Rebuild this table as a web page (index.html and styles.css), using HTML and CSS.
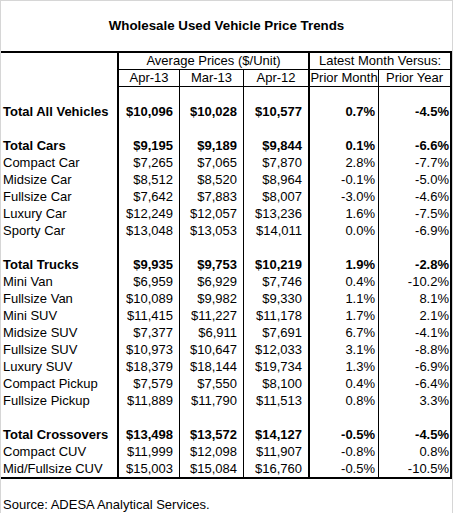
FILE: index.html
```html
<!DOCTYPE html>
<html lang="en">
<head>
    <meta charset="UTF-8">
    <meta name="viewport" content="width=device-width, initial-scale=1.0">
    <title>Wholesale Used Vehicle Price Trends</title>
    <link rel="stylesheet" href="styles.css">
</head>
<body>
    <div class="sheet">
        <h1 class="title">Wholesale Used Vehicle Price Trends</h1>

        <table class="trends">
            <colgroup>
                <col class="c-label">
                <col class="c-apr13">
                <col class="c-mar13">
                <col class="c-apr12">
                <col class="c-month">
                <col class="c-year">
            </colgroup>
            <thead>
                <tr class="head-top">
                    <th class="corner" rowspan="2"></th>
                    <th class="group" colspan="3">Average Prices ($/Unit)</th>
                    <th class="group" colspan="2">Latest Month Versus:</th>
                </tr>
                <tr class="head-sub">
                    <th>Apr-13</th>
                    <th>Mar-13</th>
                    <th>Apr-12</th>
                    <th>Prior Month</th>
                    <th>Prior Year</th>
                </tr>
            </thead>
            <tbody>
                <tr class="gap first"><td></td><td></td><td></td><td></td><td></td><td></td></tr>
                <tr class="total"><td>Total All Vehicles</td><td>$10,096</td><td>$10,028</td><td>$10,577</td><td>0.7%</td><td>-4.5%</td></tr>

                <tr class="gap"><td></td><td></td><td></td><td></td><td></td><td></td></tr>
                <tr class="total"><td>Total Cars</td><td>$9,195</td><td>$9,189</td><td>$9,844</td><td>0.1%</td><td>-6.6%</td></tr>
                <tr><td>Compact Car</td><td>$7,265</td><td>$7,065</td><td>$7,870</td><td>2.8%</td><td>-7.7%</td></tr>
                <tr><td>Midsize Car</td><td>$8,512</td><td>$8,520</td><td>$8,964</td><td>-0.1%</td><td>-5.0%</td></tr>
                <tr><td>Fullsize Car</td><td>$7,642</td><td>$7,883</td><td>$8,007</td><td>-3.0%</td><td>-4.6%</td></tr>
                <tr><td>Luxury Car</td><td>$12,249</td><td>$12,057</td><td>$13,236</td><td>1.6%</td><td>-7.5%</td></tr>
                <tr><td>Sporty Car</td><td>$13,048</td><td>$13,053</td><td>$14,011</td><td>0.0%</td><td>-6.9%</td></tr>

                <tr class="gap"><td></td><td></td><td></td><td></td><td></td><td></td></tr>
                <tr class="total"><td>Total Trucks</td><td>$9,935</td><td>$9,753</td><td>$10,219</td><td>1.9%</td><td>-2.8%</td></tr>
                <tr><td>Mini Van</td><td>$6,959</td><td>$6,929</td><td>$7,746</td><td>0.4%</td><td>-10.2%</td></tr>
                <tr><td>Fullsize Van</td><td>$10,089</td><td>$9,982</td><td>$9,330</td><td>1.1%</td><td>8.1%</td></tr>
                <tr><td>Mini SUV</td><td>$11,415</td><td>$11,227</td><td>$11,178</td><td>1.7%</td><td>2.1%</td></tr>
                <tr><td>Midsize SUV</td><td>$7,377</td><td>$6,911</td><td>$7,691</td><td>6.7%</td><td>-4.1%</td></tr>
                <tr><td>Fullsize SUV</td><td>$10,973</td><td>$10,647</td><td>$12,033</td><td>3.1%</td><td>-8.8%</td></tr>
                <tr><td>Luxury SUV</td><td>$18,379</td><td>$18,144</td><td>$19,734</td><td>1.3%</td><td>-6.9%</td></tr>
                <tr><td>Compact Pickup</td><td>$7,579</td><td>$7,550</td><td>$8,100</td><td>0.4%</td><td>-6.4%</td></tr>
                <tr><td>Fullsize Pickup</td><td>$11,889</td><td>$11,790</td><td>$11,513</td><td>0.8%</td><td>3.3%</td></tr>

                <tr class="gap"><td></td><td></td><td></td><td></td><td></td><td></td></tr>
                <tr class="total"><td>Total Crossovers</td><td>$13,498</td><td>$13,572</td><td>$14,127</td><td>-0.5%</td><td>-4.5%</td></tr>
                <tr><td>Compact CUV</td><td>$11,999</td><td>$12,098</td><td>$11,907</td><td>-0.8%</td><td>0.8%</td></tr>
                <tr><td>Mid/Fullsize CUV</td><td>$15,003</td><td>$15,084</td><td>$16,760</td><td>-0.5%</td><td>-10.5%</td></tr>
            </tbody>
        </table>

        <p class="source">Source: ADESA Analytical Services.</p>
    </div>
</body>
</html>
```

FILE: styles.css
```css
* {
    margin: 0;
    padding: 0;
    box-sizing: border-box;
}

body {
    background: #ffffff;
    font-family: 'Liberation Sans', Arial, sans-serif;
    font-size: 13px;
    color: #000000;
}

.sheet {
    width: 453px;
    height: 513px;
    border-top: 1px solid #d6d6d6;
    border-left: 1px solid #d6d6d6;
    border-right: 1px solid #d6d6d6;
    overflow: hidden;
}

.title {
    font-size: 13.33px;
    font-weight: bold;
    line-height: 17px;
    text-align: center;
    padding: 16px 0 17px;
}

/* table grid */
.trends {
    width: 451px;
    table-layout: fixed;
    border-collapse: separate;
    border-spacing: 0;
    border-top: 2px solid #000;
    border-bottom: 2px solid #000;
}

.c-label { width: 118px; }
.c-apr13 { width: 61px; }
.c-mar13 { width: 64px; }
.c-apr12 { width: 66px; }
.c-month { width: 69px; }
.c-year  { width: 73px; }

.trends th,
.trends td {
    height: 17px;
    line-height: 16px;
    white-space: nowrap;
    overflow: hidden;
}

.trends th {
    font-weight: normal;
    text-align: center;
    border-right: 1px solid #000;
}

.trends th.corner,
.trends th.group {
    border-right: 2px solid #000;
}

.trends th.group {
    border-bottom: 1px solid #000;
}

.head-sub th {
    border-bottom: 1px solid #000;
}

.head-sub th:nth-child(3),
.head-sub th:nth-child(5) {
    border-right: 2px solid #000;
}

/* body cells */
.trends td {
    text-align: right;
    border-right: 1px solid #000;
}

.trends td:first-child {
    text-align: left;
    padding-left: 2px;
    border-right: 2px solid #000;
}

.trends td:nth-child(2),
.trends td:nth-child(3) {
    padding-right: 6px;
}

.trends td:nth-child(4) {
    padding-right: 6px;
    border-right: 2px solid #000;
}

.trends td:nth-child(5) {
    padding-right: 3px;
}

.trends td:nth-child(6) {
    padding-right: 1px;
    border-right: 2px solid #000;
}

.trends tr.gap.first td {
    height: 16px;
}

.trends tr.total td {
    font-weight: bold;
}

.source {
    line-height: 17px;
    padding-left: 2px;
    margin-top: 17px;
}
```
